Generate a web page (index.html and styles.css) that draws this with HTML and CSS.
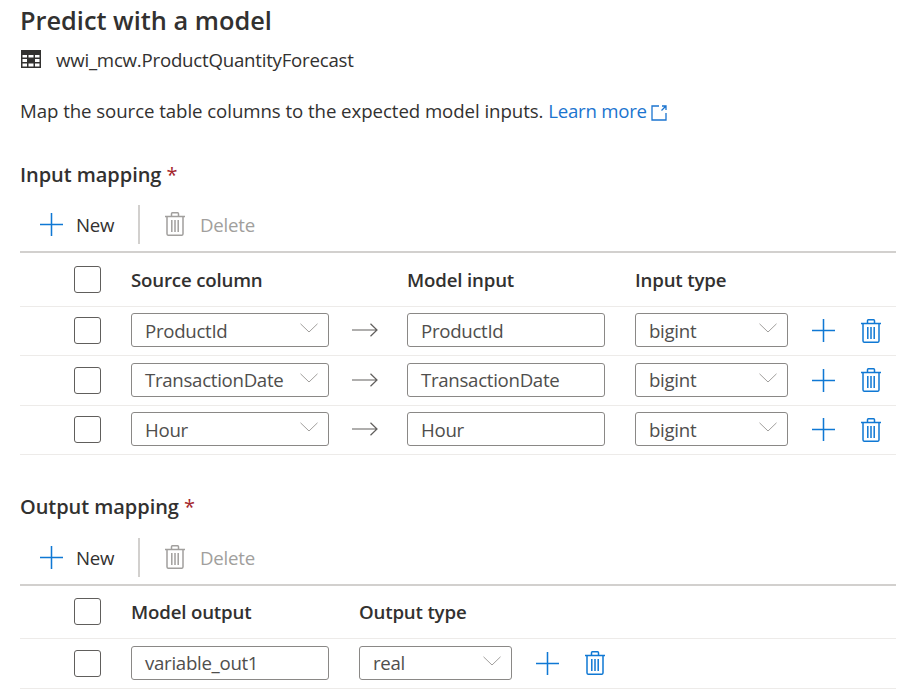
FILE: index.html
```html
<!DOCTYPE html>
<html lang="en">
<head>
<meta charset="utf-8">
<title>Predict with a model</title>
<link rel="stylesheet" href="styles.css">
</head>
<body>
<svg class="defs" width="0" height="0" aria-hidden="true">
  <symbol id="plus" viewBox="0 0 24 24"><path d="M12 0v24M0 12h24" fill="none" stroke="currentColor" stroke-width="1.6"/></symbol>
  <symbol id="trash" viewBox="0 0 20 24"><path d="M0 4.500h20M2 4.500v17.200c0 .9.7 1.600 1.600 1.600h12.800c.9 0 1.600-.7 1.600-1.600V4.500M6.500 4.500V1.700c0-.5.4-.9.9-.9h5.200c.5 0 .9.4.9.9v2.800M6.800 8v12M10 8v12M13.200 8v12" fill="none" stroke="currentColor" stroke-width="1.500"/></symbol>
  <symbol id="chev" viewBox="0 0 18 10"><path d="M.5.800 9 9 17.500.8" fill="none" stroke="currentColor" stroke-width="1"/></symbol>
</svg>
<main class="page">
  <h1 class="title">Predict with a model</h1>
  <div class="source">
    <svg class="table-icon" viewBox="0 0 20 18" aria-hidden="true">
      <path fill="#323130" d="M0 0h20v18H0z"/>
      <path fill="#fff" d="M1.500 5h4.500v2.500H1.500zM14 5h4.500v2.500H14zM1.500 9h4.500v3H1.500zM7.500 5h5v2.500h-5zM14 9h4.500v3H14zM1.500 13.500h4.500v3H1.500zM7.500 13.500h5v3h-5zM14 13.500h4.500v3H14z"/>
    </svg>
    <span>wwi_mcw.ProductQuantityForecast</span>
  </div>
  <p class="intro">Map the source table columns to the expected model inputs. <a class="link" href="#">Learn more<svg class="ext" viewBox="0 0 16 16" aria-hidden="true"><path d="M8 1H1v14h14V8M11 1h4v4M15 1l-4.500 4.500" fill="none" stroke="currentColor" stroke-width="1.300"/></svg></a></p>

  <section class="group group-input">
    <h2 class="label">Input mapping <span class="req">*</span></h2>
    <div class="toolbar">
      <button class="tool tool-new"><svg class="ic-plus"><use href="#plus"/></svg>New</button>
      <span class="divider"></span>
      <button class="tool tool-del"><svg class="ic-trash"><use href="#trash"/></svg>Delete</button>
    </div>
    <div class="row head cols-in">
      <span class="check"></span><span class="cell-first">Source column</span><span></span><span>Model input</span><span>Input type</span>
    </div>
    <div class="row cols-in">
      <span class="check"></span>
      <div class="field select cell-first"><span>ProductId</span><svg class="chev"><use href="#chev"/></svg></div>
      <svg class="arrow" viewBox="0 0 26 14" aria-hidden="true"><path d="M0 7h25M18.500 .8 25 7l-6.500 6.200" fill="none" stroke="currentColor" stroke-width="1.200"/></svg>
      <div class="field">ProductId</div>
      <div class="field select"><span>bigint</span><svg class="chev"><use href="#chev"/></svg></div>
      <div class="actions"><svg class="ic-plus"><use href="#plus"/></svg><svg class="ic-trash"><use href="#trash"/></svg></div>
    </div>
    <div class="row cols-in">
      <span class="check"></span>
      <div class="field select cell-first"><span>TransactionDate</span><svg class="chev"><use href="#chev"/></svg></div>
      <svg class="arrow" viewBox="0 0 26 14" aria-hidden="true"><path d="M0 7h25M18.500 .8 25 7l-6.500 6.200" fill="none" stroke="currentColor" stroke-width="1.200"/></svg>
      <div class="field">TransactionDate</div>
      <div class="field select"><span>bigint</span><svg class="chev"><use href="#chev"/></svg></div>
      <div class="actions"><svg class="ic-plus"><use href="#plus"/></svg><svg class="ic-trash"><use href="#trash"/></svg></div>
    </div>
    <div class="row cols-in">
      <span class="check"></span>
      <div class="field select cell-first"><span>Hour</span><svg class="chev"><use href="#chev"/></svg></div>
      <svg class="arrow" viewBox="0 0 26 14" aria-hidden="true"><path d="M0 7h25M18.500 .8 25 7l-6.500 6.200" fill="none" stroke="currentColor" stroke-width="1.200"/></svg>
      <div class="field">Hour</div>
      <div class="field select"><span>bigint</span><svg class="chev"><use href="#chev"/></svg></div>
      <div class="actions"><svg class="ic-plus"><use href="#plus"/></svg><svg class="ic-trash"><use href="#trash"/></svg></div>
    </div>
  </section>

  <section class="group group-output">
    <h2 class="label">Output mapping <span class="req">*</span></h2>
    <div class="toolbar">
      <button class="tool tool-new"><svg class="ic-plus"><use href="#plus"/></svg>New</button>
      <span class="divider"></span>
      <button class="tool tool-del"><svg class="ic-trash"><use href="#trash"/></svg>Delete</button>
    </div>
    <div class="row head cols-out">
      <span class="check"></span><span class="cell-first">Model output</span><span>Output type</span>
    </div>
    <div class="row cols-out">
      <span class="check"></span>
      <div class="field cell-first">variable_out1</div>
      <div class="field select"><span>real</span><svg class="chev"><use href="#chev"/></svg></div>
      <div class="actions"><svg class="ic-plus"><use href="#plus"/></svg><svg class="ic-trash"><use href="#trash"/></svg></div>
    </div>
  </section>
</main>
</body>
</html>
```

FILE: styles.css
```css
* { box-sizing: border-box; }
html, body { margin: 0; background: #fff; }
body {
  font-family: "Open Sans", "Noto Sans", "Liberation Sans", sans-serif;
  font-size: 18.67px;
  letter-spacing: -0.23px;
  color: #323130;
  overflow: hidden;
  height: 699px;
}
.defs { position: absolute; }
.page { width: 876px; margin-left: 20px; padding-top: 4px; }
.title { margin: 0; font-size: 25.33px; font-weight: 600; line-height: 33px; letter-spacing: 0; }
.source { display: flex; align-items: center; gap: 15px; height: 30px; margin-top: 7px; }
.table-icon { width: 20px; height: 18px; margin: 0 0 0 1px; flex: none; }
.intro { margin: 22px 0 0; height: 31px; line-height: 29px; letter-spacing: -0.07px; }
.link { color: #1b74cf; text-decoration: none; letter-spacing: -0.25px; }
.ext { width: 16px; height: 16px; margin-left: 4px; vertical-align: -3px; }
.group-input { margin-top: 33px; }
.group-output { margin-top: 36.5px; }
.label { margin: 0; font-size: 20px; font-weight: 600; line-height: 30px; letter-spacing: -0.05px; }
.req { color: #a4262c; font-weight: 400; }
.toolbar { display: flex; align-items: center; height: 63px; border-bottom: 2px solid #d2d0ce; padding-top: 7px; }
.group-output .toolbar { height: 64px; padding-top: 9px; }
.tool { display: flex; align-items: center; border: 0; background: none; padding: 0; font: inherit; letter-spacing: inherit; color: #323130; }
.tool-new { padding-left: 20px; gap: 13px; width: 118px; }
.tool-del { color: #a19f9d; padding-left: 25px; gap: 15px; }
.divider { width: 2px; height: 39px; background: #d2d0ce; }
.ic-plus { width: 23px; height: 23px; color: #0f78d4; flex: none; }
.ic-trash { width: 20px; height: 24px; color: #0f78d4; flex: none; }
.tool-del .ic-trash { color: #a19f9d; }
.row { display: grid; align-items: center; height: 49.5px; border-bottom: 1px solid #edebe9; padding-left: 54px; }
.head { height: 53.5px; font-weight: 600; letter-spacing: -0.17px; }
.cols-in { grid-template-columns: 27px 228px 78px 228px 153px auto; }
.cols-out { grid-template-columns: 27px 258px 153px auto; }
.cell-first { margin-left: 30px; }
.arrow { margin-left: 23px; margin-top: -1px; }
.check { width: 27px; height: 27px; border: 1.5px solid #605e5c; border-radius: 3px; background: #fff; }
.field {
  display: flex; align-items: center; justify-content: space-between;
  height: 34px; margin-top: -1px; padding: 0 13px 0; border: 1px solid #8a8886; border-radius: 3px;
  color: #4f4e4d; white-space: nowrap; background: #fff; letter-spacing: -0.3px;
}
.cols-in > .field:nth-child(4) { width: 198px; }
.cell-first.field { width: 198px; }
.select { padding-right: 10px; }
.chev { width: 18px; height: 10px; color: #a19f9d; margin-top: -4px; flex: none; }
.arrow { width: 26px; height: 14px; color: #605e5c; }
.actions { display: flex; align-items: center; gap: 26px; padding-left: 24px; }
```
